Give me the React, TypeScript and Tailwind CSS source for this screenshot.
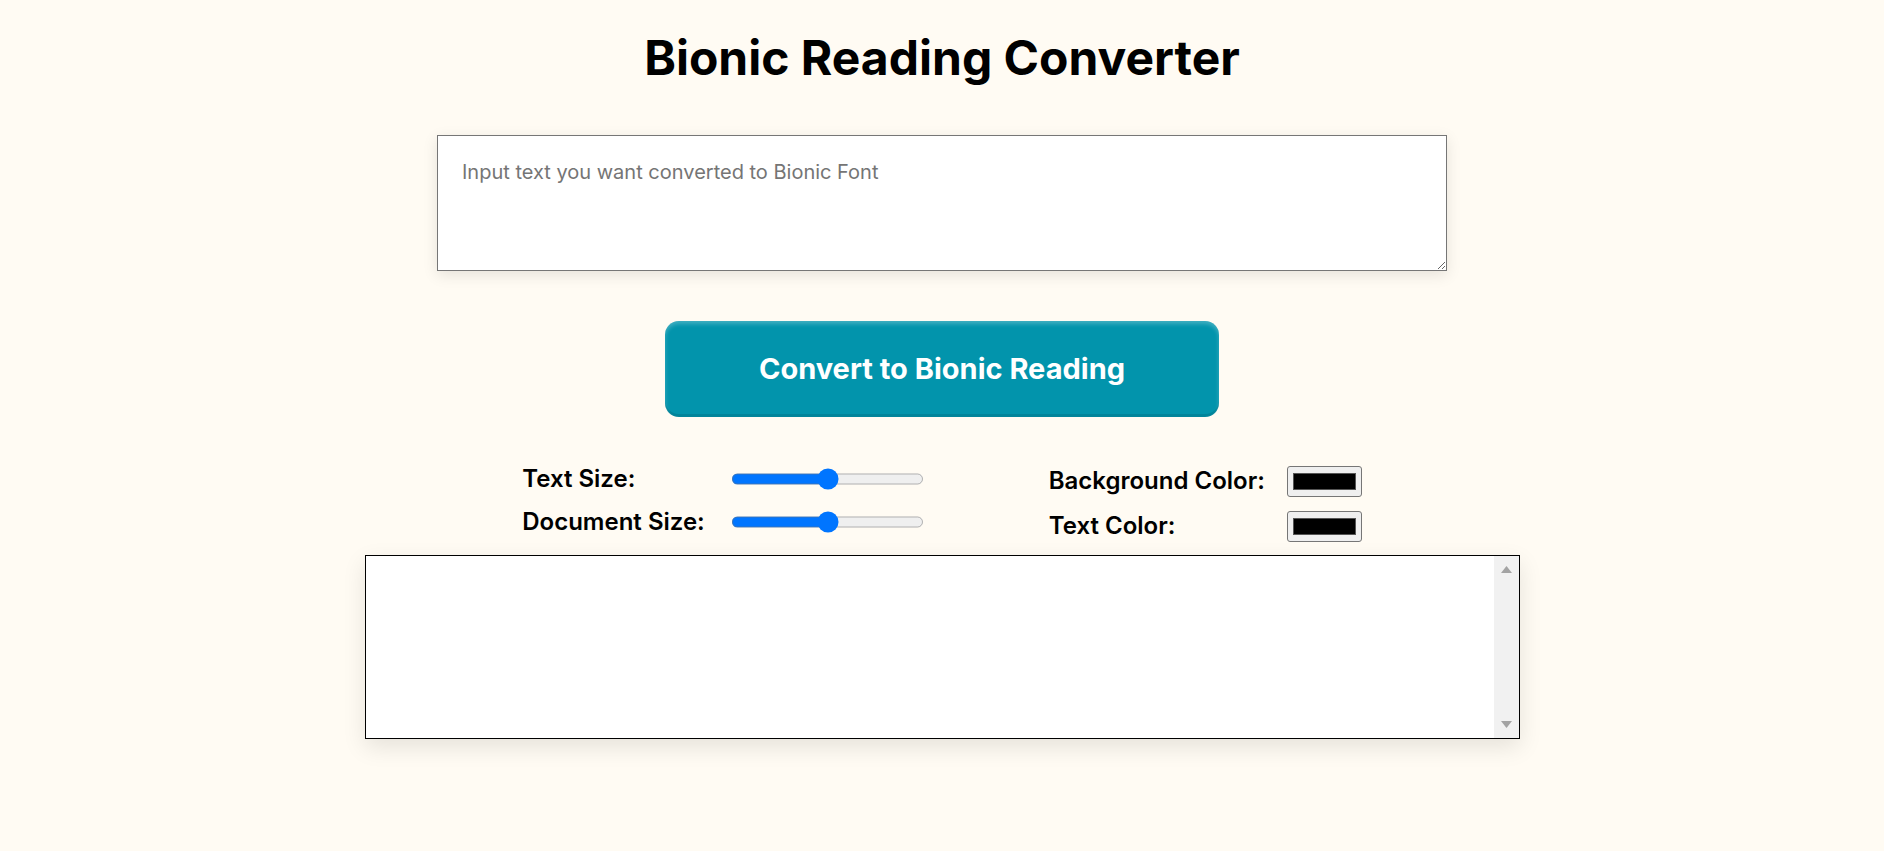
import React from "react";

const font = { fontFamily: "Inter, 'Noto Sans', sans-serif" };

const Slider = () => (
  <input
    type="range"
    min={0}
    max={100}
    defaultValue={50}
    className="w-[140px] [zoom:1.375]"
  />
);

const ColorBox = () => (
  <input
    type="color"
    defaultValue="#000000"
    className="h-[31px] w-[75px] rounded-[3px] border border-[#767676] bg-[#efefef] px-[5px] py-[6px] [&::-webkit-color-swatch-wrapper]:p-0 [&::-webkit-color-swatch]:border-[#555]"
  />
);

export default function App() {
  return (
    <div
      className="flex min-h-[851px] flex-col items-center bg-[#fffbf3] pt-[30px] text-black"
      style={font}
    >
      <h1 className="text-5xl font-bold leading-[56px]">Bionic Reading Converter</h1>

      <textarea
        placeholder="Input text you want converted to Bionic Font"
        className="mt-[49px] h-[136px] w-[1010px] border border-[#767676] bg-white px-6 pt-[21px] pb-6 text-xl leading-[30px] text-black placeholder:text-[#757575] shadow-[0_4px_14px_rgba(0,0,0,0.1)] outline-none"
      />

      <button className="mt-[50px] h-[96px] w-[554px] rounded-[14px] bg-[#0294ac] text-[29px] font-bold text-white shadow-[inset_0_3px_4px_rgba(255,255,255,0.25),inset_0_-3px_0_rgba(0,0,0,0.1)]">
        Convert to Bionic Reading
      </button>

      <div className="mt-[46px] flex gap-[125px] text-2xl font-semibold">
        <div className="flex flex-col gap-[11px]">
          <div className="flex h-[32px] items-center">
            <span className="w-[209px]">Text Size:</span>
            <Slider />
          </div>
          <div className="flex h-[32px] items-center">
            <span className="w-[209px]">Document Size:</span>
            <Slider />
          </div>
        </div>
        <div className="flex flex-col gap-[13px] pt-[2px]">
          <div className="flex h-[32px] items-center">
            <span className="w-[238px]">Background Color:</span>
            <ColorBox />
          </div>
          <div className="flex h-[32px] items-center">
            <span className="w-[238px]">Text Color:</span>
            <ColorBox />
          </div>
        </div>
      </div>

      <div className="mt-[13px] flex h-[184px] w-[1155px] border border-black bg-white shadow-[0_8px_22px_rgba(0,0,0,0.1)]">
        <div className="flex-1" />
        <div className="flex w-[25px] flex-col items-center justify-between bg-[#f1f1f1] py-[10px]">
          <svg width="11" height="7" viewBox="0 0 11 7">
            <path d="M5.5 0L11 7H0z" fill="#a3a3a3" />
          </svg>
          <svg width="11" height="7" viewBox="0 0 11 7">
            <path d="M0 0h11L5.5 7z" fill="#a3a3a3" />
          </svg>
        </div>
      </div>
    </div>
  );
}
